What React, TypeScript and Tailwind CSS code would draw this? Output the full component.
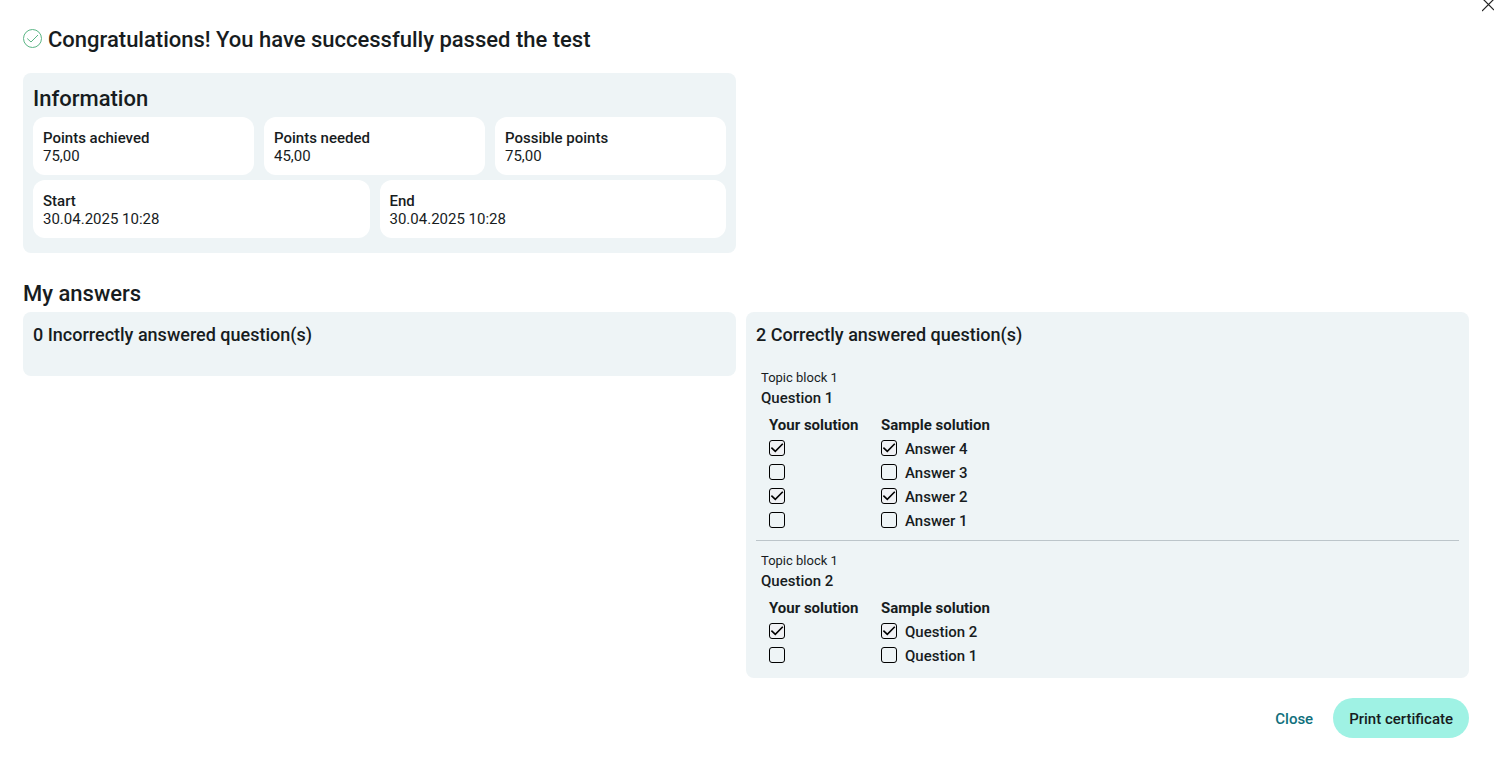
import { useId } from "react";

type Answer = { text: string; checked: boolean };
type Question = { topic: string; title: string; answers: Answer[] };

const questions: Question[] = [
  {
    topic: "Topic block 1",
    title: "Question 1",
    answers: [
      { text: "Answer 4", checked: true },
      { text: "Answer 3", checked: false },
      { text: "Answer 2", checked: true },
      { text: "Answer 1", checked: false },
    ],
  },
  {
    topic: "Topic block 1",
    title: "Question 2",
    answers: [
      { text: "Question 2", checked: true },
      { text: "Question 1", checked: false },
    ],
  },
];

function InfoCard({ label, value }: { label: string; value: string }) {
  return (
    <div className="mr-[10px] rounded-xl bg-white px-[10px] pt-3 pb-[10px] leading-[18px] last:mr-0">
      <dt className="font-medium">{label}</dt>
      <dd>{value}</dd>
    </div>
  );
}

function CheckBox({ id, label, checked }: { id?: string; label?: string; checked: boolean }) {
  return (
    <span className="mb-[2px] grid size-4 shrink-0">
      <input
        id={id}
        type="checkbox"
        aria-label={label}
        checked={checked}
        readOnly
        className="col-start-1 row-start-1 size-4 appearance-none rounded-[3px] border border-black checked:bg-[#f0f1f4]"
      />
      {checked && (
        <svg viewBox="0 0 16 16" className="pointer-events-none col-start-1 row-start-1 size-4" fill="none" stroke="#000" strokeWidth="1.6" aria-hidden="true">
          <path d="M2.400 7.600 6.300 11.300 13.800 3.800" />
        </svg>
      )}
    </span>
  );
}

function AnswerRow({ answer }: { answer: Answer }) {
  const id = useId();
  return (
    <tr className="h-6">
      <td className="p-0">
        <CheckBox label={`Your solution: ${answer.text}`} checked={answer.checked} />
      </td>
      <td className="p-0">
        <div className="flex items-center gap-2">
          <CheckBox id={id} checked={answer.checked} />
          <label htmlFor={id} className="font-medium">{answer.text}</label>
        </div>
      </td>
    </tr>
  );
}

function QuestionBlock({ question }: { question: Question }) {
  return (
    <article className="border-b border-[#bcc5ca] pb-[7px] last:border-b-0 last:pb-0">
      <p className="px-[5px] text-[13px] leading-5">{question.topic}</p>
      <h4 className="px-[5px] leading-5 font-medium">{question.title}</h4>
      <table className="mt-[5px] ml-[13px] border-collapse text-left leading-6">
        <thead>
          <tr className="h-6">
            <th scope="col" className="w-28 p-0 font-bold">Your solution</th>
            <th scope="col" className="p-0 font-bold">Sample solution</th>
          </tr>
        </thead>
        <tbody>
          {question.answers.map((a) => (
            <AnswerRow key={a.text} answer={a} />
          ))}
        </tbody>
      </table>
    </article>
  );
}

export default function App() {
  return (
    <main className="relative bg-white pt-6 pr-[25px] pb-5 pl-[23px] font-['Roboto',sans-serif] text-[15px] text-[#171c1e]">
      <button type="button" aria-label="Close dialog" className="absolute top-0 right-0 h-3 w-3 overflow-hidden">
        <svg viewBox="0 0 12 12" className="size-3" fill="none" stroke="#222" strokeWidth="1.2" aria-hidden="true">
          <path d="M0 11 12-1M0-2 12 10" />
        </svg>
      </button>

      <header className="flex items-start gap-[5px]">
        <svg viewBox="0 0 20 20" className="mt-[5px] size-5" fill="none" stroke="#5bb585" strokeWidth="1" aria-hidden="true">
          <circle cx="9.5" cy="9.500" r="9" />
          <path d="M4.200 9.500 8 13 15 6" />
        </svg>
        <h1 className="text-[22px] leading-8 font-medium">Congratulations! You have successfully passed the test</h1>
      </header>

      <div className="mt-[17px] grid grid-cols-2">
        <section className="mr-[10px] rounded-lg bg-[#eef4f6] px-[10px] pt-[10px] pb-[15px]">
          <h2 className="mb-[2px] text-[22px] leading-8 font-medium">Information</h2>
          <dl className="grid grid-cols-3">
            <InfoCard label="Points achieved" value="75,00" />
            <InfoCard label="Points needed" value="45,00" />
            <InfoCard label="Possible points" value="75,00" />
          </dl>
          <dl className="mt-[5px] grid grid-cols-2">
            <InfoCard label="Start" value="30.04.2025 10:28" />
            <InfoCard label="End" value="30.04.2025 10:28" />
          </dl>
        </section>
      </div>

      <h2 className="mt-[25px] mb-[2px] text-[22px] leading-8 font-medium">My answers</h2>
      <div className="grid grid-cols-2 items-start">
        <section className="mr-[10px] rounded-lg bg-[#eef4f6] p-[10px]">
          <h3 className="mb-[18px] text-lg leading-[26px] font-medium">0 Incorrectly answered question(s)</h3>
        </section>
        <section className="rounded-lg bg-[#eef4f6] p-[10px]">
          <h3 className="mb-5 text-lg leading-[26px] font-medium">2 Correctly answered question(s)</h3>
          <div className="flex flex-col gap-[10px]">
            {questions.map((q) => (
              <QuestionBlock key={q.title} question={q} />
            ))}
          </div>
        </section>
      </div>

      <footer className="mt-5 flex items-center justify-end gap-1">
        <button type="button" className="h-10 px-4 pt-[2px] font-medium text-[#0f6f7c]">Close</button>
        <button type="button" className="h-10 rounded-full bg-[#9ff2e4] px-4 pt-[2px] font-medium">Print certificate</button>
      </footer>
    </main>
  );
}
